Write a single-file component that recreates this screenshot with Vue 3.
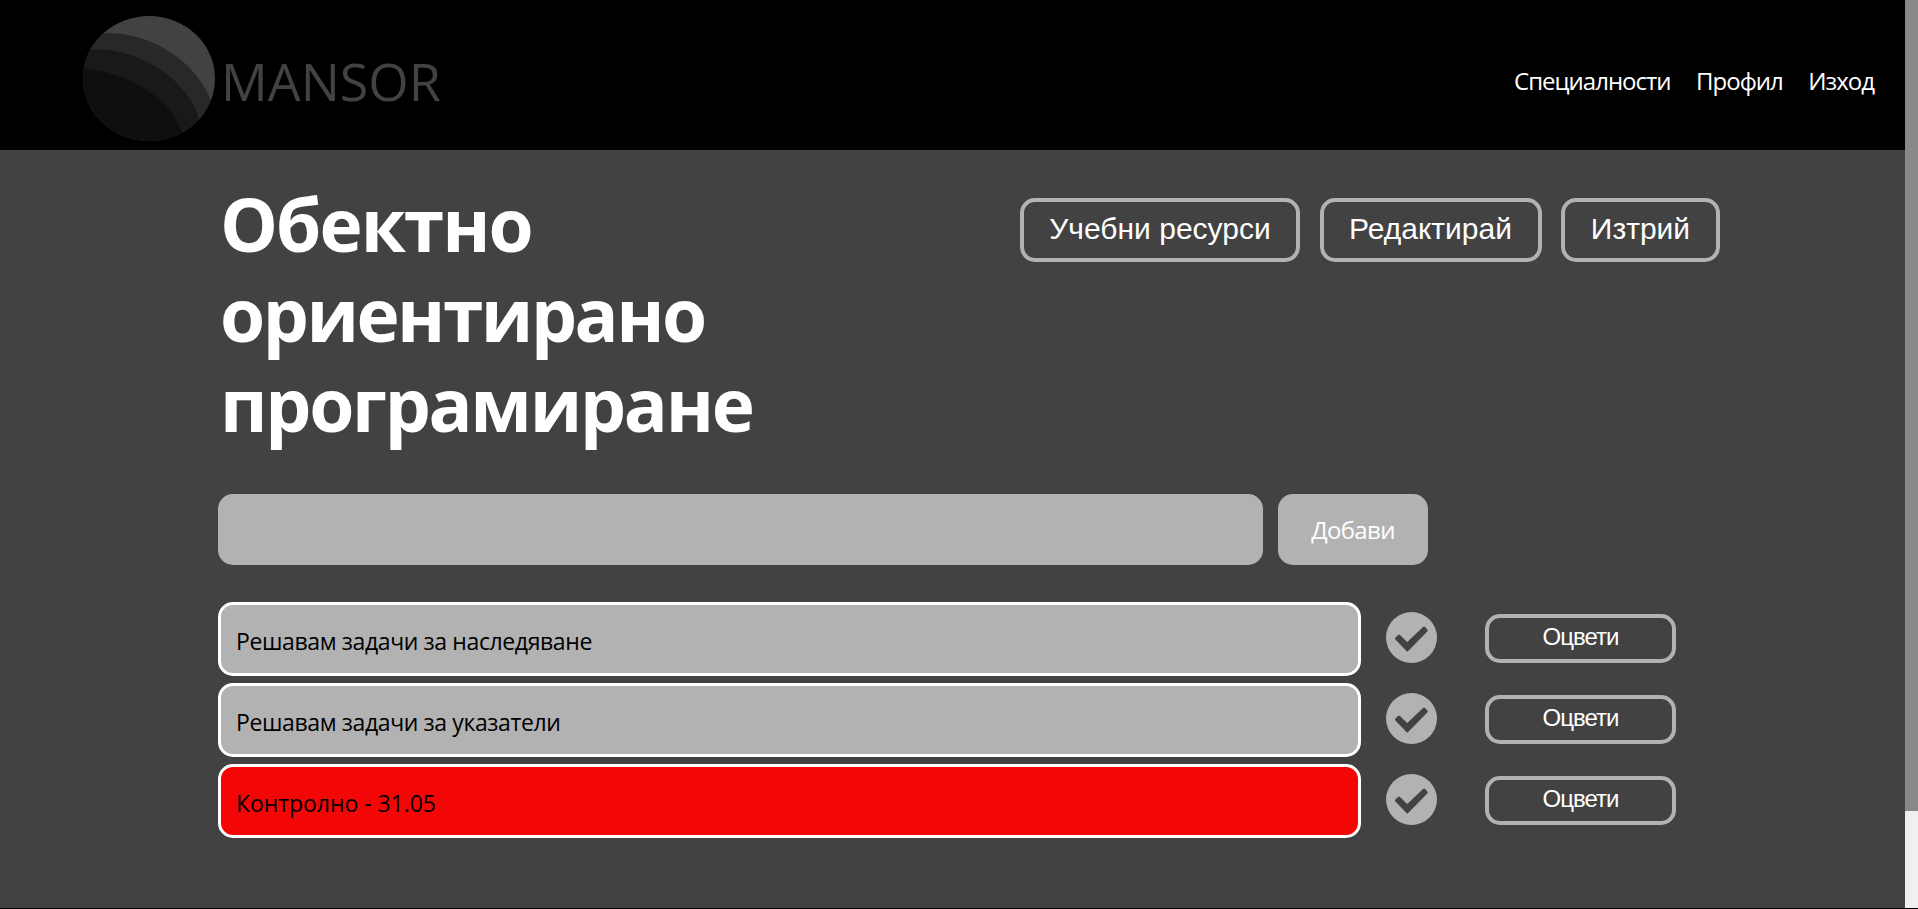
<script setup>
import { ref } from 'vue'

const links = ['Специалности', 'Профил', 'Изход']
const actions = [
  { label: 'Учебни ресурси', kind: 'resources' },
  { label: 'Редактирай', kind: 'edit' },
  { label: 'Изтрий', kind: 'delete' },
]
const draft = ref('')
const tasks = ref([
  { text: 'Решавам задачи за наследяване', kind: 'lesson', marked: false },
  { text: 'Решавам задачи за указатели', kind: 'lesson', marked: false },
  { text: 'Контролно - 31.05', kind: 'exam', marked: true },
])
</script>

<template>
  <div class="window">
    <div class="page">
      <header class="header">
        <a class="brand">
          <svg class="logo" viewBox="0 0 132 125" preserveAspectRatio="none">
            <defs>
              <clipPath id="disc"><ellipse cx="66" cy="62.5" rx="66" ry="62.5" /></clipPath>
            </defs>
            <g clip-path="url(#disc)">
              <rect width="132" height="125" fill="#424242" />
              <path d="M0 19 L20 17.5 C62 14 112 42 128 85 L128 125 H0Z" fill="#282828" />
              <path d="M0 34.5 L9 33.7 C52 31 104 61 116 103 L116 125 H0Z" fill="#191919" />
              <path d="M0 52.5 C42 56 86 79 99 116 L99 125 H0Z" fill="#0f0f0f" />
            </g>
          </svg>
          <span class="name">MANSOR</span>
        </a>
        <nav class="nav">
          <a v-for="link in links" :key="link">{{ link }}</a>
        </nav>
      </header>

      <main class="content">
        <section class="top">
          <h1>
            <span class="line short">Обектно</span>
            <span class="line middle">ориентирано</span>
            <span class="line long">програмиране</span>
          </h1>
          <div class="actions">
            <button v-for="a in actions" :key="a.kind" class="outline" :class="a.kind">
              <span>{{ a.label }}</span>
            </button>
          </div>
        </section>

        <form class="add" @submit.prevent>
          <input v-model="draft" type="text" />
          <button class="submit">Добави</button>
        </form>

        <ul class="tasks">
          <li v-for="task in tasks" :key="task.text">
            <div class="task" :class="[task.kind, { marked: task.marked }]">{{ task.text }}</div>
            <svg class="check" viewBox="0 0 51 51">
              <circle cx="25.5" cy="25.5" r="25.5" fill="#b2b2b2" />
              <path d="M10.4 26.6 L13 24.1 L21.2 32.1 L38 16 L40.3 18.4 L21.2 37.9Z" fill="#424242" stroke="#424242" stroke-width="2.8" stroke-linejoin="round" />
            </svg>
            <button class="outline paint" @click="task.marked = !task.marked"><span>Оцвети</span></button>
          </li>
        </ul>
      </main>
    </div>
    <div class="scrollbar"><div class="thumb"></div></div>
  </div>
</template>

<style>
body {
  margin: 0;
  overflow: hidden;
  background: #000;
}
</style>

<style scoped>
.window {
  display: flex;
  width: 1918px;
  height: 908px;
  font-family: "Open Sans", "Noto Sans", sans-serif;
}
.page {
  width: 1905px;
  background: #424242;
}
.scrollbar {
  width: 13px;
  background: #f0f0f0;
}
.thumb {
  height: 811px;
  background: #888;
}
.header {
  display: flex;
  justify-content: space-between;
  box-sizing: border-box;
  height: 150px;
  padding: 16px 31px 0 83px;
  background: #000;
}
.brand {
  display: flex;
  gap: 6px;
}
.logo {
  width: 132px;
  height: 125px;
}
.name {
  padding-top: 30px;
  color: #424242;
  font-size: 52px;
  line-height: 70px;
  font-weight: 400;
}
.nav {
  display: flex;
  gap: 25.5px;
  padding-top: 50px;
  color: #fff;
  font-size: 24px;
  line-height: 30px;
  letter-spacing: -1px;
}
.content {
  padding: 29px 0 0 218px;
}
.top {
  display: flex;
  justify-content: space-between;
  padding-right: 185px;
}
h1 {
  margin: 0 0 0 2px;
  height: 315px;
  color: #fff;
  font-size: 73px;
  line-height: 90px;
  font-weight: 700;
  white-space: nowrap;
}
.line {
  display: block;
}
.short { letter-spacing: -2px; }
.middle { letter-spacing: -2.5px; }
.long { letter-spacing: -2.3px; }
.actions {
  display: flex;
  gap: 19.5px;
  padding-top: 19px;
}
button {
  padding: 0;
  border: 0;
  color: #fff;
  font-family: "Liberation Sans", Arial, sans-serif;
  white-space: nowrap;
}
.outline {
  box-sizing: border-box;
  display: flex;
  justify-content: center;
  height: 64px;
  border: 4px solid #b2b2b2;
  border-radius: 15px;
  background: transparent;
  font-size: 30px;
  line-height: 53px;
}
.resources { width: 280px; }
.edit { width: 222px; }
.delete { width: 159px; }
.add {
  display: flex;
  gap: 15px;
}
input {
  box-sizing: border-box;
  width: 1045px;
  height: 71px;
  padding: 0 19px;
  border: 0;
  border-radius: 15px;
  background: #b2b2b2;
  font: inherit;
  font-size: 24px;
}
.submit {
  width: 150px;
  height: 71px;
  border-radius: 15px;
  background: #b2b2b2;
  font-family: "Open Sans", "Noto Sans", sans-serif;
  font-size: 24px;
  line-height: 71px;
  letter-spacing: -0.65px;
}
.tasks {
  display: flex;
  flex-direction: column;
  gap: 7px;
  margin: 37px 0 0;
  padding: 0;
  list-style: none;
}
li {
  display: flex;
  height: 74px;
}
.task {
  box-sizing: border-box;
  width: 1143px;
  height: 74px;
  padding: 0 15px;
  border: 3px solid #fff;
  border-radius: 15px;
  background: #b2b2b2;
  color: #000;
  font-size: 23px;
  line-height: 72px;
}
.lesson { letter-spacing: -0.38px; }
.exam { letter-spacing: -0.05px; }
.task.marked {
  background: #f20606;
}
.check {
  width: 51px;
  height: 51px;
  margin: 10px 48px 0 25px;
}
.paint {
  width: 191px;
  height: 49px;
  margin-top: 12px;
  font-size: 24px;
  line-height: 38px;
  letter-spacing: -1px;
}
</style>
